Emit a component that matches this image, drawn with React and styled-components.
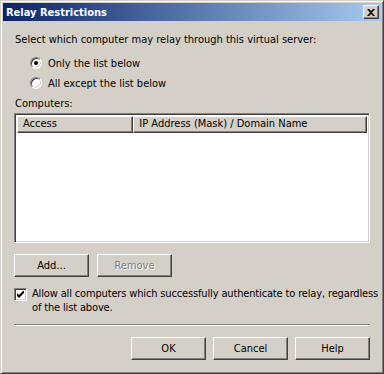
import styled, { createGlobalStyle } from 'styled-components';

const Global = createGlobalStyle`
  html, body { margin: 0; padding: 0; background: #d4d0c8; }
  body { font-family: "DejaVu Sans Condensed", "DejaVu Sans", sans-serif; font-size: 11px; color: #000; }
`;

const Window = styled.div`
  box-sizing: border-box;
  width: 384px;
  height: 374px;
  background: #d4d0c8;
  border: 1px solid;
  border-color: #d4d0c8 #404040 #404040 #d4d0c8;
  box-shadow: inset 1px 1px #fff, inset -1px -1px #808080;
  padding: 2px;
  display: flex;
  flex-direction: column;
`;

const TitleBar = styled.div`
  height: 18px;
  display: flex;
  align-items: center;
  padding: 0 2px;
  background: linear-gradient(to right, #0a246a, #a6caf0);
  color: #fff;
  font-weight: bold;
  font-size: 11px;
`;

const Title = styled.span`
  flex: 1;
  padding-left: 1px;
`;

const CloseBtn = styled.div`
  box-sizing: border-box;
  width: 16px;
  height: 14px;
  background: #d4d0c8;
  border: 1px solid;
  border-color: #fff #404040 #404040 #fff;
  box-shadow: inset -1px -1px #808080;
  display: flex;
  align-items: center;
  justify-content: center;
`;

const Body = styled.div`
  display: flex;
  flex-direction: column;
  padding: 0 11px;
`;

const Text = styled.div`
  line-height: 13px;
  height: 13px;
  padding-left: 1px;
  margin-top: ${({ mt }) => mt || 0}px;
  white-space: nowrap;
`;

const Option = styled.label`
  display: flex;
  align-items: center;
  height: 16px;
  margin-top: ${({ mt }) => mt || 0}px;
  padding-left: 16px;
  gap: 6px;
`;

const Radio = styled.span`
  box-sizing: border-box;
  width: 12px;
  height: 12px;
  border-radius: 50%;
  background: #fff;
  border: 1px solid;
  border-color: #808080 #fff #fff #808080;
  box-shadow: inset 1px 1px #404040, inset -1px -1px #d4d0c8;
  display: flex;
  align-items: center;
  justify-content: center;
  &::after {
    content: '';
    width: 4px;
    height: 4px;
    border-radius: 50%;
    background: #000;
    display: ${({ checked }) => (checked ? 'block' : 'none')};
  }
`;

const ListView = styled.div`
  box-sizing: border-box;
  margin-top: 3px;
  height: 130px;
  background: #fff;
  border: 1px solid;
  border-color: #808080 #fff #fff #808080;
  box-shadow: inset 1px 1px #404040, inset -1px -1px #d4d0c8;
  padding: 2px;
`;

const Header = styled.div`
  display: flex;
  height: 17px;
`;

const HeaderCell = styled.div`
  box-sizing: border-box;
  width: ${({ w }) => w}px;
  height: 17px;
  background: #d4d0c8;
  border: 1px solid;
  border-color: #fff #404040 #404040 #fff;
  box-shadow: inset -1px -1px #808080;
  line-height: 14px;
  padding-left: 5px;
  white-space: nowrap;
`;

const ButtonRow = styled.div`
  display: flex;
  gap: ${({ end }) => (end ? 7 : 8)}px;
  margin-top: 11px;
  justify-content: ${({ end }) => (end ? 'flex-end' : 'flex-start')};
`;

const Button = styled.button`
  box-sizing: border-box;
  width: 75px;
  height: 23px;
  padding: 0;
  font: inherit;
  background: #d4d0c8;
  border: 1px solid;
  border-color: #fff #404040 #404040 #fff;
  box-shadow: inset -1px -1px #808080;
  color: ${({ disabled }) => (disabled ? '#808080' : '#000')};
  text-shadow: ${({ disabled }) => (disabled ? '1px 1px #fff' : 'none')};
`;

const CheckRow = styled.label`
  display: flex;
  align-items: flex-start;
  gap: 5px;
  margin-top: 11px;
`;

const CheckBox = styled.span`
  box-sizing: border-box;
  flex: none;
  width: 13px;
  height: 13px;
  background: #fff;
  border: 1px solid;
  border-color: #808080 #fff #fff #808080;
  box-shadow: inset 1px 1px #404040, inset -1px -1px #d4d0c8;
  display: flex;
  align-items: center;
  justify-content: center;
`;

const CheckText = styled.div`
  line-height: 14px;
  margin-top: -1px;
  white-space: nowrap;
  letter-spacing: -0.15px;
`;

const Separator = styled.div`
  margin-top: 9px;
  height: 0;
  border-top: 1px solid #808080;
  border-bottom: 1px solid #fff;
`;

const App = () => (
  <>
    <Global />
    <Window>
      <TitleBar>
        <Title>Relay Restrictions</Title>
        <CloseBtn>
          <svg width="8" height="7" viewBox="0 0 8 7">
            <path d="M0 0h2l2 2 2-2h2L5 3.5 8 7H6L4 5 2 7H0l3-3.5z" fill="#000" />
          </svg>
        </CloseBtn>
      </TitleBar>
      <Body>
        <Text mt={12}>Select which computer may relay through this virtual server:</Text>
        <Option mt={9}>
          <Radio checked />
          Only the list below
        </Option>
        <Option mt={4}>
          <Radio />
          All except the list below
        </Option>
        <Text mt={6}>Computers:</Text>
        <ListView>
          <Header>
            <HeaderCell w={117}>Access</HeaderCell>
            <HeaderCell w={235}>IP Address (Mask) / Domain Name</HeaderCell>
          </Header>
        </ListView>
        <ButtonRow>
          <Button>Add...</Button>
          <Button disabled>Remove</Button>
        </ButtonRow>
        <CheckRow>
          <CheckBox>
            <svg width="7" height="7" viewBox="0 0 7 7">
              <path d="M0 2v3l2 2 5-5V-1L2 4z" fill="#000" />
            </svg>
          </CheckBox>
          <CheckText>
            Allow all computers which successfully authenticate to relay, regardless
            <br />
            of the list above.
          </CheckText>
        </CheckRow>
        <Separator />
        <ButtonRow end>
          <Button>OK</Button>
          <Button>Cancel</Button>
          <Button>Help</Button>
        </ButtonRow>
      </Body>
    </Window>
  </>
);

export default App;
